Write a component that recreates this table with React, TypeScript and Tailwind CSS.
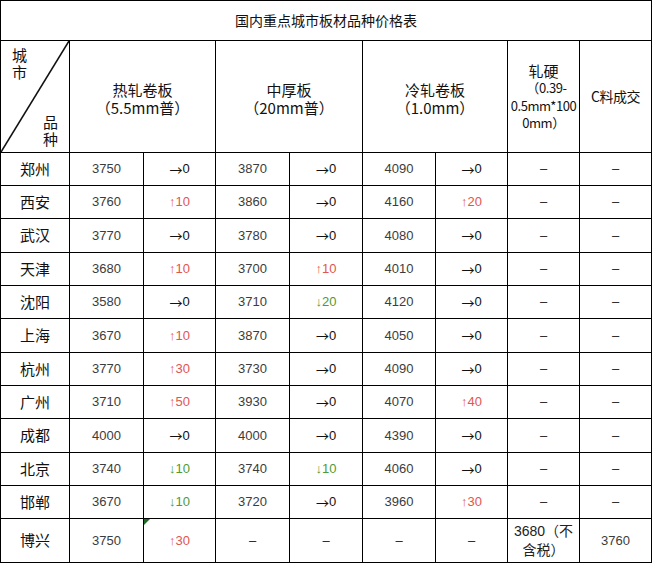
import React from "react";

type Chg = { a: string; v: string; c: "n" | "u" | "d" };
type Row = {
  city: string;
  v: [string, Chg, string, Chg, string, Chg];
};

const n: Chg = { a: "→", v: "0", c: "n" };
const u = (x: string): Chg => ({ a: "↑", v: x, c: "u" });
const d = (x: string): Chg => ({ a: "↓", v: x, c: "d" });

const rows: Row[] = [
  { city: "郑州", v: ["3750", n, "3870", n, "4090", n] },
  { city: "西安", v: ["3760", u("10"), "3860", n, "4160", u("20")] },
  { city: "武汉", v: ["3770", n, "3780", n, "4080", n] },
  { city: "天津", v: ["3680", u("10"), "3700", u("10"), "4010", n] },
  { city: "沈阳", v: ["3580", n, "3710", d("20"), "4120", n] },
  { city: "上海", v: ["3670", u("10"), "3870", n, "4050", n] },
  { city: "杭州", v: ["3770", u("30"), "3730", n, "4090", n] },
  { city: "广州", v: ["3710", u("50"), "3930", n, "4070", u("40")] },
  { city: "成都", v: ["4000", n, "4000", n, "4390", n] },
  { city: "北京", v: ["3740", d("10"), "3740", d("10"), "4060", n] },
  { city: "邯郸", v: ["3670", d("10"), "3720", n, "3960", u("30")] },
];

const cell = "border-r border-b border-black flex items-center justify-center";
const cjk = "font-['Noto_Sans_CJK_SC',sans-serif]";
const num = "font-['Liberation_Sans','Noto_Sans_CJK_SC',sans-serif]";

function ChgCell({ ch, mark }: { ch: Chg; mark?: boolean }) {
  const color =
    ch.c === "u" ? "text-[#e2554f]" : ch.c === "d" ? "text-[#4f9a34]" : "text-[#111111]";
  return (
    <div className={`${cell} ${num} relative text-[13px] ${color}`}>
      {mark && (
        <svg className="absolute left-0 top-0" width="6" height="6" viewBox="0 0 6 6">
          <polygon points="0,0 6,0 0,6" fill="#1f6b2a" />
        </svg>
      )}
      {ch.c === "n" ? (
        <span className={`${cjk} text-[13px] leading-none`}>→</span>
      ) : (
        <span>{ch.a}</span>
      )}
      <span>{ch.v}</span>
    </div>
  );
}

function NumCell({ t }: { t: string }) {
  return <div className={`${cell} ${num} text-[13px] text-[#3c3c3c]`}>{t}</div>;
}

function Dash() {
  return <div className={`${cell} ${num} text-[13px] text-[#222222]`}>–</div>;
}

export default function App() {
  return (
    <div className="w-[653px] h-[564px] bg-white">
      <div className="w-[652px] border-l border-t border-black grid grid-cols-[69px_74px_72px_74px_73px_73px_72px_72px_72px] grid-rows-[40px_112px_33px_33px_34px_33px_33px_34px_33px_33px_34px_33px_33px_44px]">
        <div className={`${cell} ${cjk} col-span-9 text-[14px] text-[#111111]`}>
          国内重点城市板材品种价格表
        </div>

        <div
          className={`${cjk} border-r border-b border-black relative flex flex-col justify-between pt-[5px] pb-[5px] pl-[11px] pr-[11px] text-[15px] leading-[17px] text-[#111111]`}
        >
          <svg className="absolute inset-0" width="68" height="111" viewBox="0 0 68 111">
            <line x1="0" y1="111" x2="68" y2="0" stroke="#111" strokeWidth="1.6" />
          </svg>
          <div className="self-start flex flex-col relative">
            <span className="block h-[17px]">城</span>
            <span className="block h-[17px]">市</span>
          </div>
          <div className="self-end flex flex-col relative">
            <span className="block h-[17px]">品</span>
            <span className="block h-[17px]">种</span>
          </div>
        </div>

        <div className={`${cell} ${cjk} col-span-2 flex-col pt-[4px] text-[15px] leading-[18px] text-[#111111]`}>
          <span>热轧卷板</span>
          <span>（5.5mm普）</span>
        </div>
        <div className={`${cell} ${cjk} col-span-2 flex-col pt-[4px] text-[15px] leading-[18px] text-[#111111]`}>
          <span>中厚板</span>
          <span>（20mm普）</span>
        </div>
        <div className={`${cell} ${cjk} col-span-2 flex-col pt-[4px] text-[15px] leading-[18px] text-[#111111]`}>
          <span>冷轧卷板</span>
          <span>（1.0mm）</span>
        </div>
        <div className={`${cell} ${cjk} flex-col text-[13px] leading-[17.5px] text-[#111111] whitespace-nowrap tracking-[-0.4px]`}>
          <span className="text-[15px] tracking-normal">轧硬</span>
          <span className="pl-[6px]">（0.39-</span>
          <span>0.5mm*100</span>
          <span>0mm）</span>
        </div>
        <div className={`${cell} ${cjk} text-[14px] text-[#111111] tracking-[-0.5px]`}>C料成交</div>

        {rows.map((r) => (
          <React.Fragment key={r.city}>
            <div className={`${cell} ${cjk} text-[15px] text-[#111111]`}>{r.city}</div>
            <NumCell t={r.v[0]} />
            <ChgCell ch={r.v[1]} />
            <NumCell t={r.v[2]} />
            <ChgCell ch={r.v[3]} />
            <NumCell t={r.v[4]} />
            <ChgCell ch={r.v[5]} />
            <Dash />
            <Dash />
          </React.Fragment>
        ))}

        <div className={`${cell} ${cjk} text-[15px] text-[#111111]`}>博兴</div>
        <NumCell t="3750" />
        <ChgCell ch={u("30")} mark />
        <Dash />
        <Dash />
        <Dash />
        <Dash />
        <div className={`${cell} ${num} flex-col text-[14px] leading-[19px] text-[#222222]`}>
          <span>3680（不</span>
          <span>含税）</span>
        </div>
        <NumCell t="3760" />
      </div>
    </div>
  );
}
